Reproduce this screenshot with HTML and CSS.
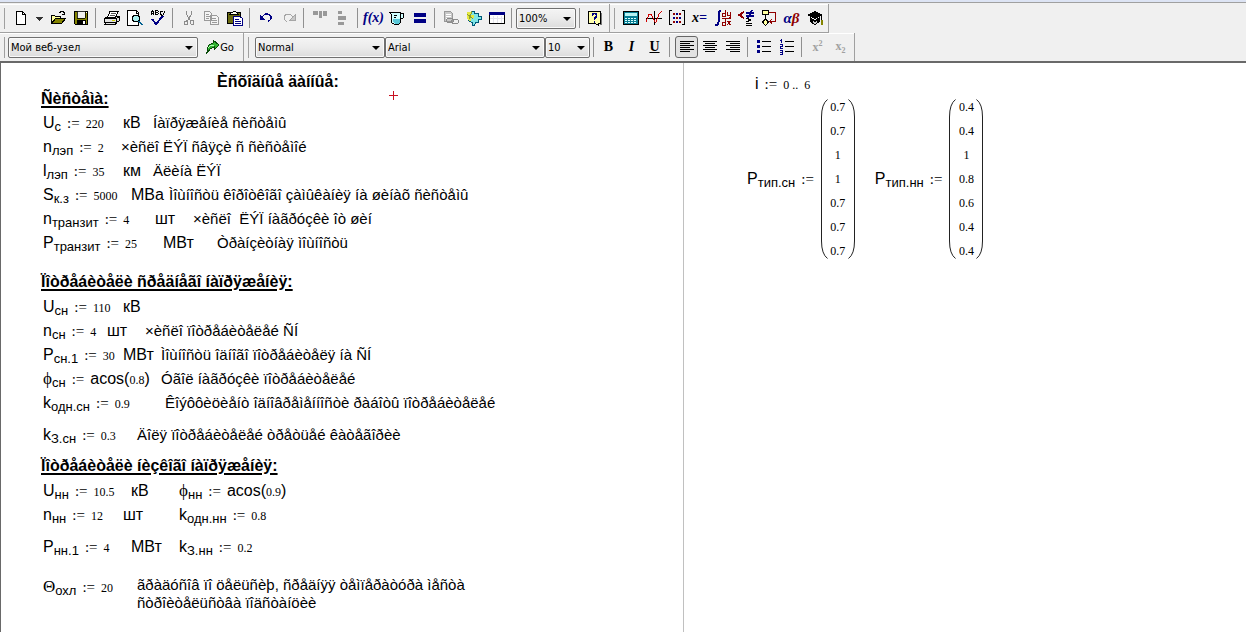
FILE: index.html
```html
<!DOCTYPE html>
<html lang="ru">
<head>
<meta charset="utf-8">
<title>Worksheet</title>
<link rel="stylesheet" href="styles.css">
</head>
<body>
<header class="bars">
  <div class="bar-row">
    <div class="bar" role="toolbar" aria-label="Standard">
      <button class="tool" aria-label="New"><svg viewBox="0 0 16 16"><path d="M3.500 1.500h6l3 3v10h-9z" fill="#fff" stroke="#000"/><path d="M9.500 1.500v3h3" fill="none" stroke="#000"/></svg></button>
      <button class="tool drop" aria-label="New from template"><svg viewBox="0 0 8 16"><path d="M1 7h7v1H1zM2 8h5v1H2zM3 9h3v1H3zM4 10h1v1H4z" fill="#333"/></svg></button>
      <button class="tool" aria-label="Open"><svg viewBox="0 0 16 16"><path d="M1 6h1V5h3v1h6v3H6l-4 5H1z" fill="#ffff9c"/><path d="M1.500 13.500v-8h3l1 1h5v2M9 2.500h1l1-1h2l1 1v2M12 4.500h3M14.500 2v3" fill="none" stroke="#000"/><path d="M1.500 13.500l4-5h10l-4 5z" fill="#848400" stroke="#000"/></svg></button>
      <button class="tool" aria-label="Save"><svg viewBox="0 0 16 16"><path d="M1.500 1.500h13v13h-12l-1-1z" fill="#848400" stroke="#000"/><path d="M4 1h8v7H4z" fill="#f0f0f0" stroke="#000" stroke-width=".8"/><path d="M4 10h9v5H4z" fill="#000"/><path d="M10 11h2v3h-2zM13 2h1v1h-1z" fill="#fff"/></svg></button>
      <span class="sep"></span>
      <button class="tool" aria-label="Print"><svg viewBox="0 0 16 16"><path d="M.5 8.500l3-2h12l-3 2zM.5 8.500h12v4H.5zM12.500 8.500l3-2v4l-3 2zM2 12.500l-1 2h10l2-2" fill="#e0e0e0" stroke="#000"/><path d="M3.500 7l2.500-5.500h8L11.500 7z" fill="#fff" stroke="#000"/><path d="M7 3.500h5M6 5.500h5" stroke="#555"/><path d="M8 10h3v1H8z" fill="#cc0"/></svg></button>
      <button class="tool" aria-label="Print preview"><svg viewBox="0 0 16 16"><path d="M.5 .5h9l2 2v13H.5z" fill="#fff" stroke="#000"/><path d="M9.500 .5v3h2" fill="none" stroke="#000"/><circle cx="9" cy="8.500" r="3.500" fill="#a8f0f0" stroke="#000"/><path d="M11.500 11l4 4" stroke="#006090" stroke-width="2"/></svg></button>
      <button class="tool" aria-label="Check spelling"><svg viewBox="0 0 16 16"><path d="M1.500 5V2l1-1 1 1v3M1.500 3.500h2M5.500 .5h2l1 1-1 1h-2zM5.500 2.500h2l1 1-1 1h-2v-2M12.500 1h-1l-1 1v2l1 1h1M13 5l2-4" fill="none" stroke="#000"/><path d="M2 9l4 5 7-8" fill="none" stroke="#000084" stroke-width="2"/></svg></button>
      <span class="sep"></span>
      <button class="tool" aria-label="Cut" disabled><svg viewBox="0 0 16 16"><path d="M5.500 1v3l4 7M10.500 1v3l-4 7" fill="none" stroke="#8c8c8c"/><path d="M3.500 11.500h2v-1h1v4h-3zM9.500 10.500h3v4h-2l-1-1z" fill="none" stroke="#8c8c8c"/></svg></button>
      <button class="tool" aria-label="Copy" disabled><svg viewBox="0 0 16 16"><path d="M.5 1.500h5l2 2v7h-7zM6.500 5.500h6l2 2v7h-8z" fill="#f4f4f4" stroke="#9a9a9a"/><path d="M2 4.500h3M2 6.500h4M2 8.500h3M8 8.500h4M8 10.500h5M8 12.500h5" stroke="#9a9a9a"/></svg></button>
      <button class="tool" aria-label="Paste"><svg viewBox="0 0 16 16"><path d="M.5 2.500h13v11H.5z" fill="#6b6b10" stroke="#000"/><path d="M3 4l1-2h2l1-1h1l1 1h1l1 2z" fill="#ffe" stroke="#000"/><path d="M6.500 6.500h6l3 2v7h-9z" fill="#fff" stroke="#000084"/><path d="M8 9.500h4M8 11.500h6M8 13.500h6" stroke="#000084"/></svg></button>
      <span class="sep"></span>
      <button class="tool" aria-label="Undo"><svg viewBox="0 0 16 16"><path d="M3 8l4-4h3l3 2v3l-2 2h-1" fill="none" stroke="#000084" stroke-width="1.300"/><path d="M2 5v5h5z" fill="#000084"/></svg></button>
      <button class="tool" aria-label="Redo" disabled><svg viewBox="0 0 16 16"><path d="M13 8L9 4H6L3 6v3l2 2h1" fill="none" stroke="#a5a5a5"/><path d="M14 5v5H9z" fill="#c8c8c8" stroke="#a5a5a5"/></svg></button>
      <span class="sep"></span>
      <button class="tool" aria-label="Align across" disabled><svg viewBox="0 0 16 16"><path d="M1 1h5v4H1zM7 1h3v7H7zM11 1h4v5h-4z" fill="#999"/></svg></button>
      <button class="tool" aria-label="Align down" disabled><svg viewBox="0 0 16 16"><path d="M3 1h4v3H3zM3 6h8v4H3zM3 12h6v3H3z" fill="#999"/></svg></button>
      <span class="sep"></span>
      <button class="tool glyph fx" aria-label="Insert function">f(x)</button>
      <button class="tool" aria-label="Insert unit"><svg viewBox="0 0 16 16"><path d="M.5 2.500h11v1h3v4l-3 2v3l-2 2h-4l-3-2v-8z" fill="#d0ffff" stroke="#000"/><path d="M4 9h7v3l-2 2H6l-2-2z" fill="#5ac8d8"/><path d="M5 5.500h3M5 7.500h2M11.500 3.500v6" stroke="#000"/></svg></button>
      <button class="tool" aria-label="Calculate"><svg viewBox="0 0 16 16"><path d="M2 3h12v4H2zM2 9h12v4H2z" fill="#000084"/></svg></button>
      <span class="sep"></span>
      <button class="tool" aria-label="Insert hyperlink" disabled><svg viewBox="0 0 16 16"><path d="M1.500 1.500h6l2 2v8h-8z" fill="#c8c8c8" stroke="#999"/><path d="M3 4.500h5M3 6.500h5M3 8.500h3" stroke="#fff"/><rect x="3.500" y="8.500" width="7" height="4" rx="2" fill="none" stroke="#8c8c8c"/><rect x="8.500" y="9.500" width="7" height="4" rx="2" fill="none" stroke="#8c8c8c"/></svg></button>
      <button class="tool" aria-label="Insert component"><svg viewBox="0 0 16 16"><path d="M1.500 2.500h4v-1h3v2h4v3h3v3h-3v3h-3l-1 3h-2v-3l-3-1-2-3z" fill="#7fe6e6" stroke="#005878"/><path d="M1 2h4v3h3v3H5v3H3L1 8z" fill="#e4e840"/><path d="M1 4l6 5M6 1l-3 8" stroke="#8a9a30"/></svg></button>
      <button class="tool" aria-label="Insert table"><svg viewBox="0 0 16 16"><path d="M.5 2.500h15v11H.5z" fill="#fff" stroke="#000"/><path d="M0 2h16v3H0z" fill="#000084"/><path d="M4.500 6v7M8.500 6v7M12.500 6v7M1 8.500h14" stroke="#e4e4ec"/></svg></button>
      <span class="sep"></span>
      <span class="combo zoom"><select aria-label="Zoom"><option>100%</option></select></span>
      <span class="sep narrow"></span>
      <button class="tool" aria-label="Help"><svg viewBox="0 0 16 16"><path d="M1.500 1.500h12v12h-2v2l-3-2h-7z" fill="#ffffad" stroke="#000"/><path d="M14.500 3v11.500H13" fill="none" stroke="#777"/><path d="M5.500 6V4.500l1-1h2l1 1v2l-2 2V10M7.500 11v1.500" fill="none" stroke="#000084" stroke-width="1.500"/></svg></button>
    </div>
    <div class="bar math" role="toolbar" aria-label="Math">
      <button class="tool" aria-label="Calculator"><svg viewBox="0 0 16 16"><path d="M.5 1.500h15v13H.5z" fill="#087e94" stroke="#000"/><path d="M2 3h12v3H2z" fill="#b8f4f4"/><path d="M2 8.500h12M2 10.500h12M2 12.500h12" stroke="#d8ffff" stroke-dasharray="2 1"/></svg></button>
      <button class="tool" aria-label="Graph"><svg viewBox="0 0 16 16"><path d="M0 8.500h16M8.500 1v14" stroke="#000"/><path d="M0 12l3-8h2l4 8h1l3-8 3-3" fill="none" stroke="#d00000"/></svg></button>
      <button class="tool" aria-label="Matrix"><svg viewBox="0 0 16 16"><path d="M3 .5H.5v14H3M13 .5h2.500v14H13" fill="none" stroke="#000"/><path d="M4 3h2v2H4zM10 3h2v2h-2zM7 7h2v2H7zM4 11h2v2H4zM10 11h2v2h-2z" fill="#900000"/><path d="M7 3h2v2H7zM4 7h2v2H4zM10 7h2v2h-2zM7 11h2v2H7z" fill="#000084"/></svg></button>
      <button class="tool glyph" aria-label="Evaluation">x<b class="navy">=</b></button>
      <button class="tool" aria-label="Calculus"><svg viewBox="0 0 16 16"><path d="M6 1H4.500L3.500 3v9l-1 2.500H0" fill="none" stroke="#000084" stroke-width="2"/><path d="M7 8.500h9M10.500 0v6H7.500V3h3M12.500 2v3h3M15.500 2v5h-2M10.500 9v6h-3v-3h3M12.500 11l3 4M15.500 11l-3 4" fill="none" stroke="#900000"/></svg></button>
      <button class="tool" aria-label="Boolean"><svg viewBox="0 0 16 16"><path d="M6 2L1 5l5 3" fill="none" stroke="#900000" stroke-width="2"/><path d="M8 2h8v2H8zM8 5h8v2H8zM13 0h2l-4 8H9z" fill="#000084"/><path d="M8 8l5 2-5 2M8 13.500h6M8 15.500h6" fill="none" stroke="#000"/></svg></button>
      <button class="tool" aria-label="Programming"><svg viewBox="0 0 16 16"><path d="M1.500 .5h6v4h-6zM4.500 9l3 3-3 3.500-3-3.500z" fill="#ffffa0" stroke="#000"/><path d="M4.500 5v4" stroke="#000"/><path d="M8 2.500h6.500v9H9M11 9l-2 2.500 2 2" fill="none" stroke="#900000"/></svg></button>
      <button class="tool glyph greek" aria-label="Greek"><b class="navy">α</b><b class="maroon">β</b></button>
      <button class="tool" aria-label="Symbolic"><svg viewBox="0 0 16 16"><path d="M0 5l8-4 8 4-8 4z" fill="#000"/><path d="M3 7l5 3 5-3v5l-5 3-5-3z" fill="#000"/><path d="M6 11l2 1 2-1v2l-2 1-2-1z" fill="#ccc"/><path d="M14.500 6v4" stroke="#000"/><path d="M14 10h2v5h-2z" fill="#848400"/></svg></button>
    </div>
  </div>
  <div class="bar-row">
    <div class="bar" role="toolbar" aria-label="Resources">
      <span class="combo site"><select aria-label="Address"><option>Мой веб-узел</option></select></span>
      <button class="tool go"><svg viewBox="0 0 16 16"><path d="M2 15l1-2v-3l2-4 4-2V1l6 5-5 5V8l-4 2-2 3z" fill="#32b432" stroke="#084a08"/><path d="M4 9l3-3h3" fill="none" stroke="#b0ffb0"/></svg>Go</button>
    </div>
    <div class="bar format" role="toolbar" aria-label="Formatting">
      <span class="combo style"><select aria-label="Style"><option>Normal</option></select></span>
      <span class="combo font"><select aria-label="Font"><option>Arial</option></select></span>
      <span class="combo size"><select aria-label="Font size"><option>10</option></select></span>
      <span class="sep narrow"></span>
      <button class="tool letter" aria-label="Bold"><b>B</b></button>
      <button class="tool letter" aria-label="Italic"><i>I</i></button>
      <button class="tool letter" aria-label="Underline"><u>U</u></button>
      <span class="sep wide"></span>
      <button class="tool pressed" aria-label="Align left"><svg viewBox="0 0 16 16"><path d="M1 2.500h14M1 4.500h10M1 6.500h14M1 8.500h10M1 10.500h14M1 12.500h10" stroke="#000"/></svg></button>
      <button class="tool" aria-label="Align center"><svg viewBox="0 0 16 16"><path d="M1 2.500h14M3 4.500h10M1 6.500h14M3 8.500h10M1 10.500h14M3 12.500h10" stroke="#000"/></svg></button>
      <button class="tool" aria-label="Align right"><svg viewBox="0 0 16 16"><path d="M1 2.500h14M5 4.500h10M1 6.500h14M5 8.500h10M1 10.500h14M5 12.500h10" stroke="#000"/></svg></button>
      <span class="sep"></span>
      <button class="tool" aria-label="Bullets"><svg viewBox="0 0 16 16"><path d="M1 1h3v3H1zM1 6h3v3H1zM1 11h3v3H1z" fill="#000084"/><path d="M6 2.500h9M6 7.500h9M6 12.500h9" stroke="#000"/></svg></button>
      <button class="tool" aria-label="Numbering"><svg viewBox="0 0 16 16"><path d="M2.500 0v4M1 1.500h1M1 5.500h2.500v2h-2v2H4M1 11.500h2.500v4H1M1 13.500h2" fill="none" stroke="#000084"/><path d="M6 2.500h9M6 7.500h9M6 12.500h9" stroke="#000"/></svg></button>
      <span class="sep"></span>
      <button class="tool script" aria-label="Superscript" disabled><span>x<sup>2</sup></span></button>
      <button class="tool script" aria-label="Subscript" disabled><span>x<sub>2</sub></span></button>
    </div>
  </div>
</header>
<main class="sheet">
  <section class="page">
    <h1>Èñõîäíûå äàííûå:</h1>
    <h2>Ñèñòåìà:</h2>
    <svg class="cursor" viewBox="0 0 9 9" aria-hidden="true"><path d="M0 4h9v1H0zM4 0h1v9H4z" fill="#c81020"/></svg>
    <div class="line"><span class="w80 m">U<sub>с</sub><q>:=</q><var>220</var></span><span class="w30">кВ</span><p>Íàïðÿæåíèå ñèñòåìû</p></div>
    <div class="line"><span class="w78 m">n<sub>лэп</sub><q>:=</q><var>2</var></span><p>×èñëî ËÝÏ ñâÿçè ñ ñèñòåìîé</p></div>
    <div class="line"><span class="w80 m">l<sub>лэп</sub><q>:=</q><var>35</var></span><span class="w30">км</span><p>Äëèíà ËÝÏ</p></div>
    <div class="line"><span class="w88 m">S<sub>к.з</sub><q>:=</q><var>5000</var></span><span class="w38">МВа</span><p>Ìîùíîñòü êîðîòêîãî çàìûêàíèÿ íà øèíàõ ñèñòåìû</p></div>
    <div class="line"><span class="w112 m">n<sub>транзит</sub><q>:=</q><var>4</var></span><span class="w38">шт</span><p>×èñëî&nbsp; ËÝÏ íàãðóçêè îò øèí</p></div>
    <div class="line"><span class="w120 m">P<sub>транзит</sub><q>:=</q><var>25</var></span><span class="w54">МВт</span><p>Òðàíçèòíàÿ ìîùíîñòü</p></div>
    <h2 class="middle">Ïîòðåáèòåëè ñðåäíåãî íàïðÿæåíèÿ:</h2>
    <div class="line"><span class="w80 m">U<sub>сн</sub><q>:=</q><var>110</var></span><span class="w30">кВ</span></div>
    <div class="line"><span class="w64 m">n<sub>сн</sub><q>:=</q><var>4</var></span><span class="w38">шт</span><p>×èñëî ïîòðåáèòåëåé ÑÍ</p></div>
    <div class="line"><span class="w80 m">P<sub>сн.1</sub><q>:=</q><var>30</var></span><span class="w38">МВт</span><p>Ìîùíîñòü îäíîãî ïîòðåáèòåëÿ íà ÑÍ</p></div>
    <div class="line"><span class="w118 m"><em>ϕ</em><sub>сн</sub><q>:=</q>acos(<var>0.8</var>)</span><p>Óãîë íàãðóçêè ïîòðåáèòåëåé</p></div>
    <div class="line"><span class="w122 m">k<sub>одн.сн</sub><q>:=</q><var>0.9</var></span><p>Êîýôôèöèåíò îäíîâðåìåííîñòè ðàáîòû ïîòðåáèòåëåé</p></div>
    <div class="line gap"><span class="w94 m">k<sub>З.сн</sub><q>:=</q><var>0.3</var></span><p>Äîëÿ ïîòðåáèòåëåé òðåòüåé êàòåãîðèè</p></div>
    <h2 class="low">Ïîòðåáèòåëè íèçêîãî íàïðÿæåíèÿ:</h2>
    <div class="line"><span class="w88 m">U<sub>нн</sub><q>:=</q><var>10.5</var></span><span class="w48">кВ</span><span class="m"><em>ϕ</em><sub>нн</sub><q>:=</q>acos(<var>0.9</var>)</span></div>
    <div class="line"><span class="w80 m">n<sub>нн</sub><q>:=</q><var>12</var></span><span class="w56">шт</span><span class="m">k<sub>одн.нн</sub><q>:=</q><var>0.8</var></span></div>
    <div class="line gap"><span class="w88 m">P<sub>нн.1</sub><q>:=</q><var>4</var></span><span class="w48">МВт</span><span class="m">k<sub>З.нн</sub><q>:=</q><var>0.2</var></span></div>
    <div class="line note"><span class="w94 m"><em>Θ</em><sub>охл</sub><q>:=</q><var>20</var></span><p>ãðàäóñîâ ïî öåëüñèþ, ñðåäíÿÿ òåìïåðàòóðà ìåñòà<br>ñòðîèòåëüñòâà ïîäñòàíöèè</p></div>
  </section>
  <section class="page second">
    <div class="range m">i<q>:=</q><var>0 .. &nbsp;6</var></div>
    <div class="vectors">
      <div class="vector"><span class="m">P<sub>тип.сн</sub><q>:=</q></span>
        <svg class="paren" viewBox="0 0 8 160" preserveAspectRatio="none"><path d="M7.500 .5Q1.500 5 1.500 18v124q0 13 6 17.500" fill="none" stroke="#222"/></svg>
        <ol><li>0.7</li><li>0.7</li><li>1</li><li>1</li><li>0.7</li><li>0.7</li><li>0.7</li></ol>
        <svg class="paren" viewBox="0 0 8 160" preserveAspectRatio="none"><path d="M.5 .5q6 4.500 6 17.500v124q0 13-6 17.500" fill="none" stroke="#222"/></svg>
      </div>
      <div class="vector"><span class="m">P<sub>тип.нн</sub><q>:=</q></span>
        <svg class="paren" viewBox="0 0 8 160" preserveAspectRatio="none"><path d="M7.500 .5Q1.500 5 1.500 18v124q0 13 6 17.500" fill="none" stroke="#222"/></svg>
        <ol><li>0.4</li><li>0.4</li><li>1</li><li>0.8</li><li>0.6</li><li>0.4</li><li>0.4</li></ol>
        <svg class="paren" viewBox="0 0 8 160" preserveAspectRatio="none"><path d="M.5 .5q6 4.500 6 17.500v124q0 13-6 17.500" fill="none" stroke="#222"/></svg>
      </div>
    </div>
  </section>
</main>
</body>
</html>
```
FILE: styles.css
```css
* { box-sizing: border-box; }
body {
  margin: 0;
  min-height: 100vh;
  display: flex;
  flex-direction: column;
  background: #fff;
  color: #000;
  font-family: "Liberation Sans", Arial, sans-serif;
  font-size: 16px;
}

/* Toolbars */
.bars {
  background: #f0f0f0;
  border-top: 2px solid #dde4f4;
  border-bottom: 2px solid #696969;
  font-family: "DejaVu Sans Condensed", "DejaVu Sans", sans-serif;
  font-size: 11px;
}
.bar-row { display: flex; }
.bar-row:first-child { border-top: 1px solid #a0a0a0; padding-top: 1px; }
.bar {
  display: flex;
  align-items: center;
  height: 29px;
  padding: 0 3px 0 9px;
  border-right: 1px solid #a0a0a0;
  border-bottom: 1px solid #a0a0a0;
  box-shadow: inset 0 1px #fff;
  background: linear-gradient(#a0a0a0, #a0a0a0) 4px 4px / 1px 21px no-repeat;
}
.bar-row:last-child .bar { border-bottom: 0; height: 28px; padding-left: 8px; }
.bar-row:last-child .format { padding-left: 11px; padding-right: 2px; }
.math { padding: 0 2px 0 9px; }
.tool {
  width: 23px;
  height: 22px;
  flex: none;
  display: flex;
  align-items: center;
  justify-content: center;
  padding: 0;
  border: 0;
  background: none;
  color: #000;
  font: inherit;
}
.tool svg { width: 16px; height: 16px; flex: none; shape-rendering: crispEdges; }
.drop { width: 14px; }
.tool.drop svg { width: 8px; }
.sep { flex: none; width: 8px; height: 20px; background: linear-gradient(#909090, #909090) 3px 0 / 1px 100% no-repeat; }
.wide { width: 9px; }
.narrow { width: 7px; }
.glyph { font: italic bold 14px "Liberation Serif", serif; }
.fx { color: #000084; }
.greek { font-size: 15px; }
.navy { color: #000084; }
.maroon { color: #900000; }
.letter { font: bold 14px "Liberation Serif", serif; }
.script { color: #a0a0a0; font: bold 12px "Liberation Serif", serif; }
.script sup, .script sub { font-size: 8px; line-height: 8px; }
.pressed { background: #e2e2e2; border: 1px solid #666; border-radius: 3px; }
.go { width: 42px; }
.combo { position: relative; height: 21px; flex: none; }
.combo::after {
  content: "";
  position: absolute;
  right: 5px;
  top: 9px;
  border: 4px solid transparent;
  border-top-color: #000;
  border-bottom: 0;
  pointer-events: none;
}
.combo select {
  appearance: none;
  width: 100%;
  height: 100%;
  margin: 0;
  padding: 0 14px 0 2px;
  border: 1px solid #707070;
  border-radius: 2px;
  background: linear-gradient(#f4f4f4, #ebebeb 50%, #dcdcdc);
  box-shadow: inset 0 0 0 1px #fafafa;
  color: #000;
  font: inherit;
}
.zoom { width: 60px; }
.site { width: 190px; }
.style { width: 130px; }
.font { width: 160px; }
.size { width: 45px; }

/* Worksheet */
.sheet { flex: 1; display: flex; border-left: 1px solid #696969; }
.page { flex: 0 0 683px; padding: 11px 0 0 40px; border-right: 1px solid #c0c0c0; }
.second { flex: 1; border-right: 0; padding: 10px 0 0 63px; }
h1, h2, p { margin: 0; font-size: 16px; line-height: 18px; }
h1 { margin-left: 176px; line-height: 16px; }
h2 { display: table; margin-bottom: 3px; height: 18px; text-decoration: underline; text-decoration-thickness: 2px; text-underline-offset: 2px; }
p { font-size: 15px; }
.middle { margin: 18px 0 4px; }
.low { margin: 10px 0 4px; }
.cursor { position: absolute; left: 389px; top: 91px; width: 9px; height: 9px; }
.line { display: flex; align-items: center; height: 24px; padding-left: 2px; white-space: nowrap; }
.line span, .line p { flex: none; }
.gap { margin-top: 8px; }
.note { align-items: flex-start; height: 36px; margin-top: 17px; }
.m { line-height: 22px; white-space: nowrap; }
.m sub { font-size: 13px; line-height: 13px; vertical-align: -3px; }
.m em { font: 17px/18px "Liberation Serif", serif; }
.m q { quotes: none; margin: 0 6px; font: 15px/18px "Liberation Serif", serif; }
.m var { font: 12px/18px "Liberation Serif", serif; }
.w30 { width: 30px; }
.w38 { width: 38px; }
.w48 { width: 48px; }
.w54 { width: 54px; }
.w56 { width: 56px; }
.w64 { width: 64px; }
.w78 { width: 78px; }
.w80 { width: 80px; }
.w88 { width: 88px; }
.w94 { width: 94px; }
.w112 { width: 112px; }
.w118 { width: 118px; }
.w120 { width: 120px; }
.w122 { width: 122px; }
.range { padding-left: 8px; }
.vectors { display: flex; gap: 19px; }
.vector { display: flex; align-items: center; }
.paren { width: 8px; height: 160px; }
ol { width: 20px; margin: 0; padding: 0; list-style: none; font: 12px/24px "Liberation Serif", serif; text-align: center; }
```
